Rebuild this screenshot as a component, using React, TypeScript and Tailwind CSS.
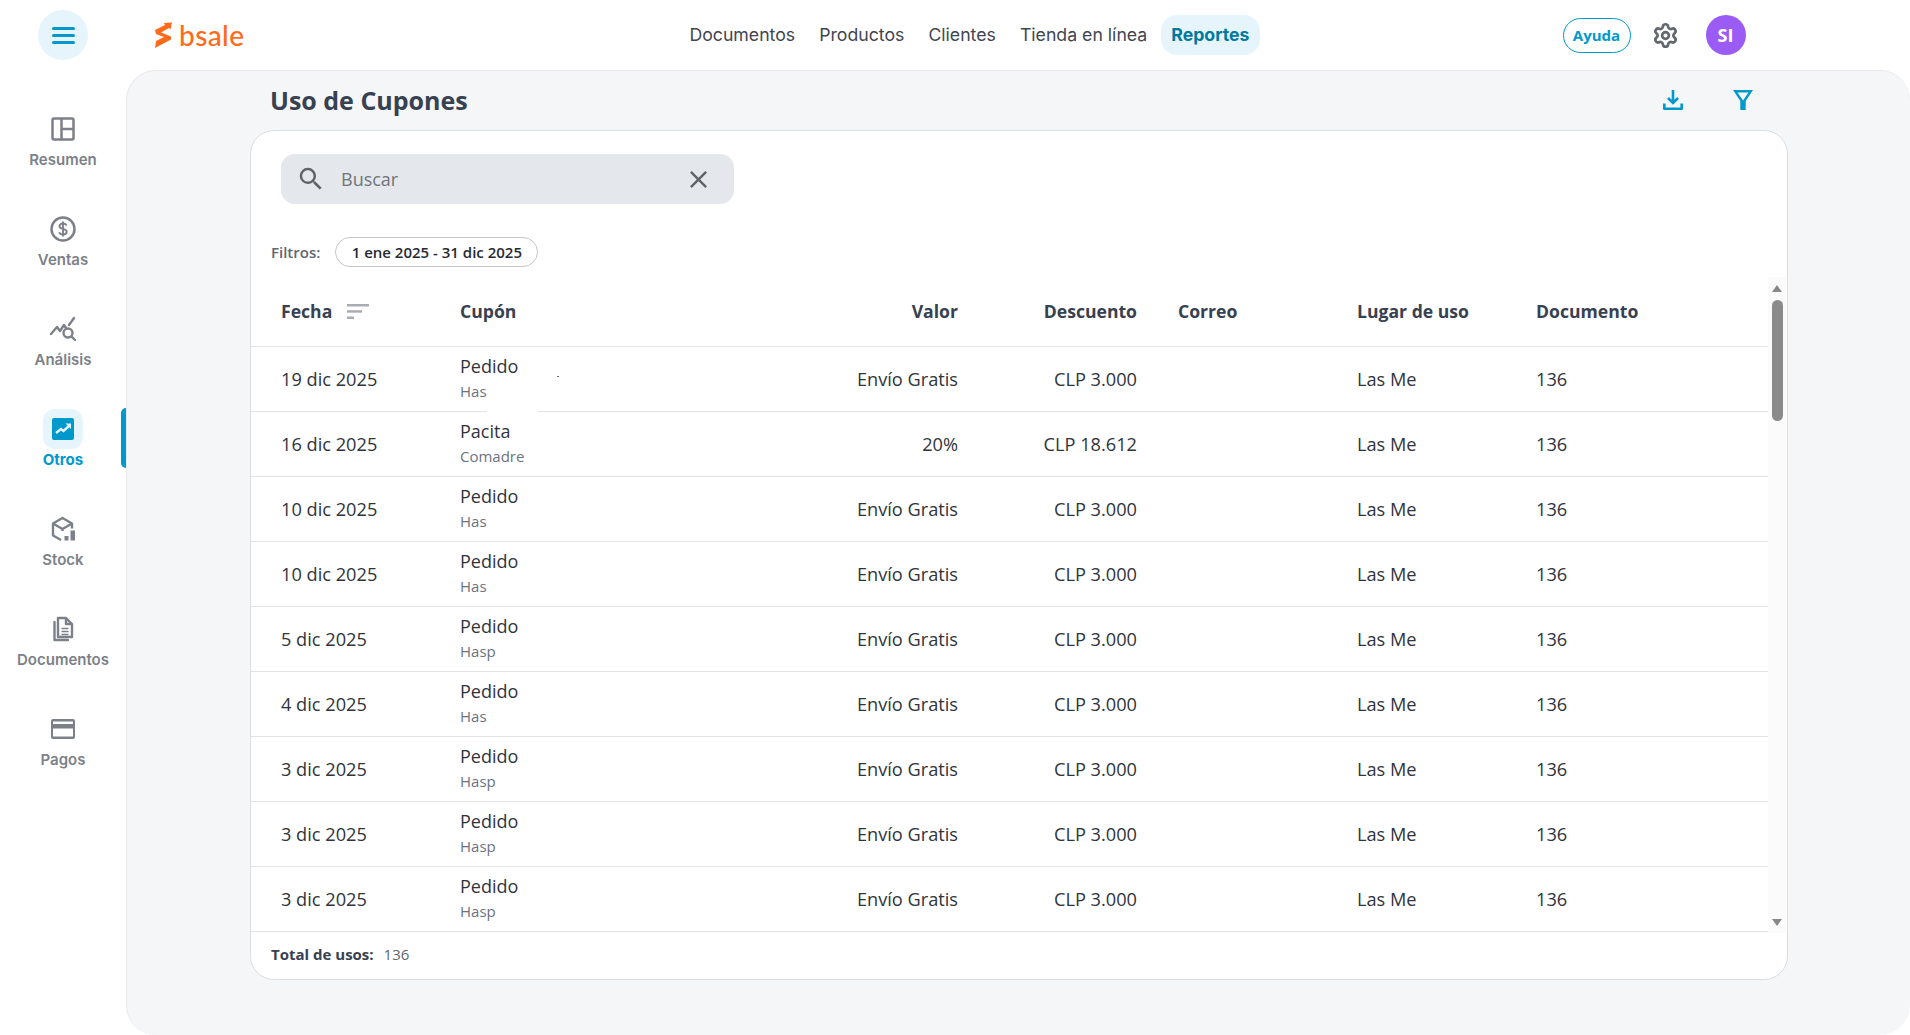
import { Settings } from 'lucide-react';
import type { ReactNode } from 'react';

const rows = [
  { fecha: '19 dic 2025', cupon: 'Pedido', sub: 'Has', valor: 'Envío Gratis', descuento: 'CLP 3.000' },
  { fecha: '16 dic 2025', cupon: 'Pacita', sub: 'Comadre', valor: '20%', descuento: 'CLP 18.612' },
  { fecha: '10 dic 2025', cupon: 'Pedido', sub: 'Has', valor: 'Envío Gratis', descuento: 'CLP 3.000' },
  { fecha: '10 dic 2025', cupon: 'Pedido', sub: 'Has', valor: 'Envío Gratis', descuento: 'CLP 3.000' },
  { fecha: '5 dic 2025', cupon: 'Pedido', sub: 'Hasp', valor: 'Envío Gratis', descuento: 'CLP 3.000' },
  { fecha: '4 dic 2025', cupon: 'Pedido', sub: 'Has', valor: 'Envío Gratis', descuento: 'CLP 3.000' },
  { fecha: '3 dic 2025', cupon: 'Pedido', sub: 'Hasp', valor: 'Envío Gratis', descuento: 'CLP 3.000' },
  { fecha: '3 dic 2025', cupon: 'Pedido', sub: 'Hasp', valor: 'Envío Gratis', descuento: 'CLP 3.000' },
  { fecha: '3 dic 2025', cupon: 'Pedido', sub: 'Hasp', valor: 'Envío Gratis', descuento: 'CLP 3.000' },
];

const gridCols = 'grid grid-cols-[179px_319px_179px_179px_220px_179px_1fr] pl-[30px]';

const ResumenIcon = () => (
  <svg width="24" height="24" viewBox="0 0 24 24" fill="none" stroke="currentColor" strokeWidth="2.500">
    <rect x="1.500" y="1.500" width="21" height="21" rx="1.500" />
    <path d="M10.500 2v20M10.500 12h12" />
  </svg>
);

const VentasIcon = () => (
  <svg width="26" height="26" viewBox="0 0 26 26" fill="none" stroke="currentColor" strokeWidth="2.500">
    <circle cx="13" cy="13" r="11.500" />
    <path
      d="M16.500 9.500c-.5-1.500-1.800-2-3.500-2-2 0-3.500 1-3.500 2.700 0 3.800 7.200 1.800 7.200 5.600 0 1.700-1.600 2.700-3.700 2.700-1.900 0-3.300-.8-3.800-2.300M13 5.500v15"
      strokeWidth="1.900"
    />
  </svg>
);

const AnalisisIcon = () => (
  <svg width="28" height="26" viewBox="0 0 28 26" fill="none" stroke="currentColor" strokeWidth="2.400" strokeLinecap="round" strokeLinejoin="round">
    <path d="M2 18l6-7 3 4 4-6 2 3M20 9l5-7" />
    <circle cx="19" cy="17" r="4.500" />
    <path d="M22.500 20.500l3.500 3.500" />
  </svg>
);

const OtrosIcon = () => (
  <svg width="24" height="24" viewBox="0 0 24 24">
    <rect x="1" y="1" width="22" height="22" rx="2" fill="#0099cc" />
    <path d="M5 16l5-4 2.500 2 5.500-5" fill="none" stroke="#e6f5fb" strokeWidth="2.400" />
    <path d="M14.500 6.500h5.500v5.500z" fill="#e6f5fb" />
  </svg>
);

const StockIcon = () => (
  <svg width="26" height="26" viewBox="0 0 26 26" fill="none" stroke="currentColor" strokeWidth="2.400" strokeLinejoin="round">
    <path d="M11 24l-8-4.500V7.500L12.500 2 22 7.500v5" />
    <path d="M3 7.500l9.500 5.500L22 7.500M12.500 13v2" />
    <rect x="14.500" y="20" width="4" height="4.500" fill="currentColor" stroke="none" />
    <rect x="20.500" y="14.500" width="4.500" height="10" fill="currentColor" stroke="none" />
  </svg>
);

const DocumentosIcon = () => (
  <svg width="24" height="26" viewBox="0 0 24 26" fill="none" stroke="currentColor" strokeWidth="2.400" strokeLinejoin="round">
    <path d="M7 2h8l6 6v13H7zM15 2v6h6" />
    <path d="M3.500 6v18H17" strokeLinecap="round" />
    <path d="M10.500 12.500h7M10.500 15.500h7M10.500 18.500h7" strokeWidth="1.500" />
  </svg>
);

const PagosIcon = () => (
  <svg width="26" height="22" viewBox="0 0 26 22" fill="currentColor">
    <path
      fillRule="evenodd"
      d="M3 1h20a2 2 0 0 1 2 2v16a2 2 0 0 1-2 2H3a2 2 0 0 1-2-2V3a2 2 0 0 1 2-2zm0 2.500V6h20V3.500zM3 10.500v8h20v-8z"
    />
  </svg>
);

const BsaleLogo = () => (
  <svg width="17" height="26" viewBox="0 0 17 26" fill="#ff6b1a">
    <path d="M0 8l10-5-1-2 8-.5-1.500 7-1.500-1.500-8 4.500 10 4v3L0 26l1-7 8-4-8-3z" />
  </svg>
);

const MenuIcon = () => (
  <svg width="23" height="17" viewBox="0 0 23 17" fill="currentColor">
    <rect y="0" width="23" height="3" rx="1.500" />
    <rect y="7" width="23" height="3" rx="1.500" />
    <rect y="14" width="23" height="3" rx="1.500" />
  </svg>
);

const SearchIcon = () => (
  <svg width="30" height="30" viewBox="0 0 24 24" fill="currentColor">
    <path d="M15.500 14h-.79l-.28-.27A6.471 6.471 0 0 0 16 9.500 6.500 6.500 0 1 0 9.500 16c1.610 0 3.090-.59 4.230-1.570l.27.28v.79l5 4.990L20.490 19l-4.990-5zm-6 0C7.010 14 5 11.990 5 9.500S7.010 5 9.500 5 14 7.010 14 9.500 11.990 14 9.500 14z" />
  </svg>
);

const CloseIcon = () => (
  <svg width="29" height="29" viewBox="0 0 24 24" fill="currentColor">
    <path d="M19 6.410 17.590 5 12 10.590 6.410 5 5 6.410 10.590 12 5 17.590 6.410 19 12 13.410 17.590 19 19 17.590 13.410 12z" />
  </svg>
);

const DownloadIcon = () => (
  <svg width="20" height="20" viewBox="0 0 20 20" fill="none" stroke="currentColor" strokeWidth="2.600">
    <path d="M10 0v12M5 8l5 5 5-5" />
    <path d="M1.300 13.500v5.200h17.400v-5.200" strokeLinejoin="round" />
  </svg>
);

const FilterIcon = () => (
  <svg width="20" height="20" viewBox="0 0 20 20" fill="currentColor">
    <path fillRule="evenodd" d="M0 0h20l-7.300 11v9H7.300v-9zM4.500 2.500 10 10.500l5.500-8z" />
  </svg>
);

const SideItem = ({
  icon,
  label,
  active = false,
}: {
  icon: ReactNode;
  label: string;
  active?: boolean;
}) => (
  <div className="relative flex h-[100px] w-full flex-col items-center">
    <div
      className={`flex h-10 w-10 items-center justify-center rounded-xl ${
        active ? 'bg-[#e6f5fb] text-[#0099cc]' : 'text-[#7c8189]'
      }`}>
      {icon}
    </div>
    <span
      className={`mt-[1px] text-[15px] leading-5 ${
        active ? 'font-bold text-[#0099cc]' : 'font-semibold text-[#7c8189]'
      }`}>
      {label}
    </span>
    {active && (
      <div className="absolute top-[-1px] right-0 h-[60px] w-[5px] rounded-l-md bg-[#0099cc]" />
    )}
  </div>
);

const NavLink = ({ label, active = false }: { label: string; active?: boolean }) => (
  <div
    className={`flex h-10 items-center rounded-2xl px-2.5 text-[17.700px] ${
      active ? 'bg-[#e6f5fb] font-bold text-[#007a9e]' : 'text-[#3f4650]'
    }`}>
    {label}
  </div>
);

export default function App() {
  return (
    <div className="flex h-[1035px] w-full flex-col overflow-hidden bg-white font-['Inter',sans-serif]">
      <header className="flex h-[70px] shrink-0 items-center">
        <div className="flex w-[126px] shrink-0 justify-center">
          <button className="flex h-[50px] w-[50px] items-center justify-center rounded-full bg-[#e6f5fb] text-[#0099cc]">
            <MenuIcon />
          </button>
        </div>
        <div className="ml-[29px] flex items-center gap-[7px]">
          <BsaleLogo />
          <span className="font-['Lato',sans-serif] text-[28px] leading-none font-medium tracking-[0.4px] text-[#ff6b1a]">
            bsale
          </span>
        </div>
        <nav className="ml-[435px] flex items-center gap-[4px]">
          <NavLink label="Documentos" />
          <NavLink label="Productos" />
          <NavLink label="Clientes" />
          <NavLink label="Tienda en línea" />
          <NavLink label="Reportes" active />
        </nav>
        <div className="ml-[303px] flex items-center font-['Open_Sans',sans-serif]">
          <div className="flex h-[35px] w-[68px] items-center justify-center rounded-full border border-[#0099cc] text-[15px] font-bold text-[#0099cc]">
            Ayuda
          </div>
          <Settings size={27} strokeWidth={2.400} className="ml-[21px] text-[#62686f]" />
          <div className="ml-[27px] flex h-10 w-10 items-center justify-center rounded-full bg-[#9b5cf6] text-lg font-bold text-white">
            SI
          </div>
        </div>
      </header>

      <div className="flex min-h-0 flex-1">
        <aside className="w-[126px] shrink-0 pt-[39px]">
          <SideItem icon={<ResumenIcon />} label="Resumen" />
          <SideItem icon={<VentasIcon />} label="Ventas" />
          <SideItem icon={<AnalisisIcon />} label="Análisis" />
          <SideItem icon={<OtrosIcon />} label="Otros" active />
          <SideItem icon={<StockIcon />} label="Stock" />
          <SideItem icon={<DocumentosIcon />} label="Documentos" />
          <SideItem icon={<PagosIcon />} label="Pagos" />
        </aside>

        <main className="flex-1 rounded-[30px] border-t border-l border-[#e8e9ec] bg-[#f5f6f8] pl-[123px] font-['Open_Sans',sans-serif]">
          <div className="flex h-[59px] w-[1538px] items-center justify-between">
            <h1 className="pl-[20px] text-[25px] font-bold text-[#374151]">Uso de Cupones</h1>
            <div className="flex items-center gap-[50px] pr-[35px] pb-[2px] text-[#0099cc]">
              <DownloadIcon />
              <FilterIcon />
            </div>
          </div>

          <section className="relative h-[850px] w-[1538px] rounded-[24px] border border-[#dcdde0] bg-white">
            <div className="pt-[23px] pl-[30px]">
              <div className="flex h-[50px] w-[453px] items-center rounded-[14px] bg-[#e4e7eb] pr-[21px] pl-[15px] text-[#5f6368]">
                <SearchIcon />
                <span className="ml-[15px] flex-1 text-lg text-[#70757a]">Buscar</span>
                <CloseIcon />
              </div>
            </div>

            <div className="mt-[33px] flex h-[30px] items-center pl-[20px]">
              <span className="text-[15px] font-semibold text-[#5f6670]">Filtros:</span>
              <div className="ml-[15px] flex h-[30px] w-[203px] items-center justify-center rounded-full border border-[#c4c6ca] text-[15px] font-semibold text-[#262b33]">
                1 ene 2025 - 31 dic 2025
              </div>
            </div>

            <div className={`${gridCols} mt-[10px] h-[70px] w-[1517px] items-center border-b border-[#e2e3e6] text-[17.600px] font-bold text-[#374151]`}>
              <div className="flex items-center gap-[15px]">
                Fecha
                <svg width="22" height="15" viewBox="0 0 22 15" fill="#a8adb5">
                  <rect y="0" width="22" height="2.500" />
                  <rect y="6.200" width="15" height="2.500" />
                  <rect y="12.500" width="7" height="2.500" />
                </svg>
              </div>
              <div>Cupón</div>
              <div className="text-right">Valor</div>
              <div className="text-right">Descuento</div>
              <div className="pl-[41px]">Correo</div>
              <div>Lugar de uso</div>
              <div>Documento</div>
            </div>

            {rows.map((row, i) => (
              <div
                key={i}
                className={`${gridCols} relative h-[65px] w-[1517px] items-center border-b border-[#e2e3e6] pt-[2px] text-[18.200px] text-[#2f343b]`}>
                <div>{row.fecha}</div>
                <div className="-mt-[4px] flex flex-col">
                  <span className="text-lg leading-[25px]">{row.cupon}</span>
                  <span className="text-[15px] leading-[24px] text-[#6b7280]">{row.sub}</span>
                </div>
                <div className="text-right">{row.valor}</div>
                <div className="text-right">{row.descuento}</div>
                <div />
                <div>Las Me</div>
                <div>136</div>
                {i === 0 && (
                  <>
                    <div className="absolute top-[29px] left-[306px] h-px w-[2px] bg-[#666]" />
                    <div className="absolute bottom-[-1px] left-[236px] h-[2px] w-[51px] bg-white" />
                  </>
                )}
              </div>
            ))}

            {/* scrollbar de la tabla */}
            <div className="absolute top-[146px] right-[1px] flex h-[656px] w-[18px] flex-col items-center bg-[#fbfbfb]">
              <svg width="10" height="8" viewBox="0 0 10 8" fill="#888" className="mt-[8px]">
                <path d="M5 0l5 7H0z" />
              </svg>
              <div className="mt-[7px] h-[121px] w-[11px] rounded-full bg-[#8b8b8b]" />
              <div className="flex-1" />
              <svg width="10" height="8" viewBox="0 0 10 8" fill="#888" className="mb-[7px]">
                <path d="M5 8L0 1h10z" />
              </svg>
            </div>

            <div className="flex h-[44px] items-center pl-[20px] text-[15px]">
              <span className="font-bold text-[#374151]">Total de usos:</span>
              <span className="ml-[10px] text-[#5f6670]">136</span>
            </div>
          </section>
        </main>
      </div>
    </div>
  );
}
